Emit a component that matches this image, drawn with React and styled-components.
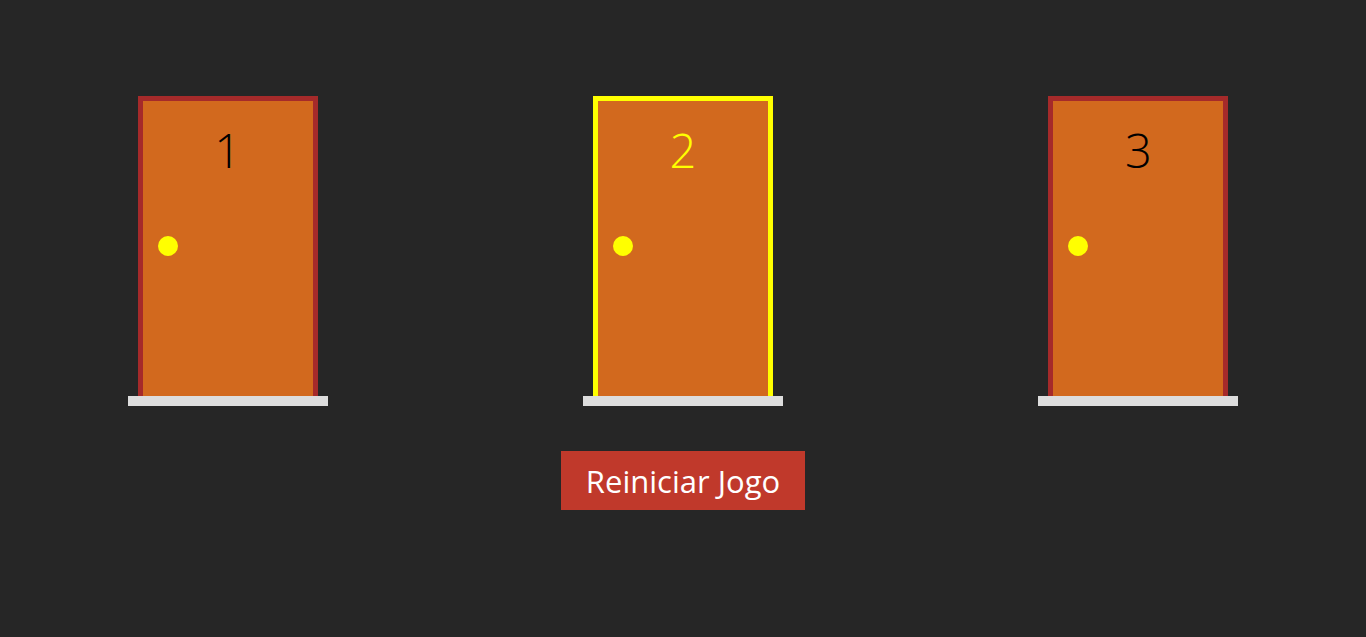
import React, { useState } from "react";
import styled, { createGlobalStyle } from "styled-components";

const GlobalStyle = createGlobalStyle`
  html, body {
    margin: 0;
    padding: 0;
    background-color: #262626;
    font-family: "Open Sans", "Noto Sans", sans-serif;
  }
`;

const Page = styled.div`
  display: flex;
  flex-direction: column;
  align-items: center;
  padding-top: 96px;
  min-height: 637px;
  box-sizing: border-box;
`;

const DoorsRow = styled.div`
  display: flex;
  width: 100%;
`;

const Column = styled.div`
  flex: 1;
  display: flex;
  justify-content: center;
`;

const DoorArea = styled.div`
  display: flex;
  flex-direction: column;
  align-items: center;
  cursor: pointer;
`;

const Frame = styled.div`
  width: 170px;
  height: 295px;
  border: 5px solid ${(p) => (p.selected ? "#ffff00" : "#a52a2a")};
  border-bottom: none;
  background-color: #d2691e;
  display: flex;
  flex-direction: column;
  align-items: center;
`;

const Number = styled.div`
  margin-top: 21px;
  font-size: 47px;
  font-weight: 300;
  line-height: 56px;
  color: ${(p) => (p.selected ? "#ffff00" : "#000")};
`;

const Knob = styled.div`
  align-self: flex-start;
  width: 20px;
  height: 20px;
  border-radius: 50%;
  background-color: #ffff00;
  margin: 58px 0 0 15px;
`;

const Floor = styled.div`
  width: 200px;
  height: 10px;
  background-color: #dddddd;
`;

const RestartButton = styled.button`
  margin-top: 45px;
  width: 244px;
  height: 59px;
  padding: 0;
  border: none;
  background-color: #c0392b;
  color: #fff;
  font-family: "Open Sans", "Noto Sans", sans-serif;
  font-size: 31px;
  cursor: pointer;
`;

const Door = ({ number, selected, onClick }) => (
  <DoorArea onClick={onClick}>
    <Frame selected={selected}>
      <Number selected={selected}>{number}</Number>
      <Knob />
    </Frame>
    <Floor />
  </DoorArea>
);

export default function App() {
  const [selected, setSelected] = useState(2);

  return (
    <>
      <GlobalStyle />
      <Page>
        <DoorsRow>
          {[1, 2, 3].map((n) => (
            <Column key={n}>
              <Door
                number={n}
                selected={selected === n}
                onClick={() => setSelected(n)}
              />
            </Column>
          ))}
        </DoorsRow>
        <RestartButton onClick={() => setSelected(null)}>
          Reiniciar Jogo
        </RestartButton>
      </Page>
    </>
  );
}
